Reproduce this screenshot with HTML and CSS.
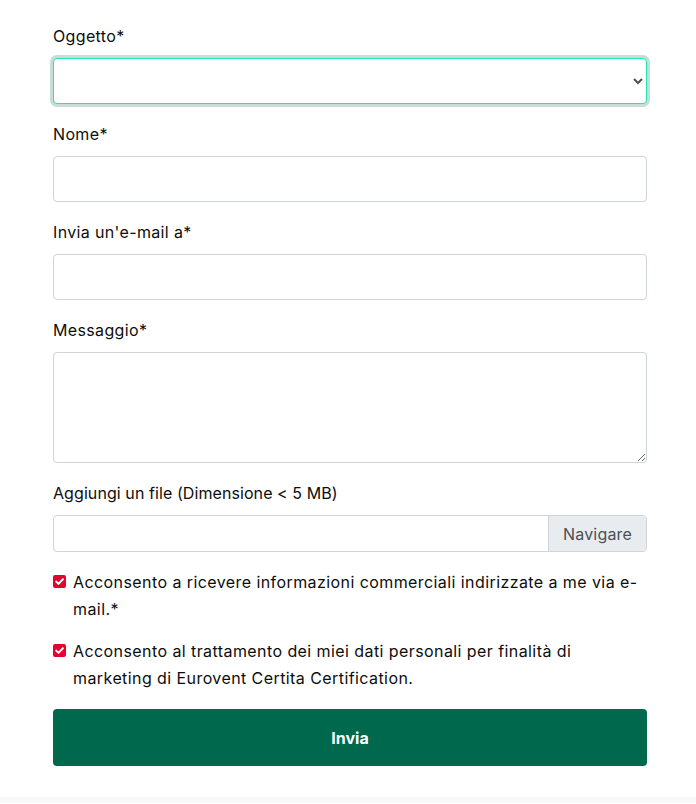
FILE: index.html
```html
<!DOCTYPE html>
<html lang="it">
<head>
<meta charset="utf-8">
<title>Contatto</title>
<link rel="stylesheet" href="styles.css">
</head>
<body>
<main class="page">
  <form class="contact-form">
    <div class="group">
      <label class="label" for="oggetto">Oggetto*</label>
      <select id="oggetto" class="control select is-focused">
        <option></option>
      </select>
    </div>
    <div class="group">
      <label class="label" for="nome">Nome*</label>
      <input id="nome" class="control" type="text">
    </div>
    <div class="group">
      <label class="label" for="email">Invia un'e-mail a*</label>
      <input id="email" class="control" type="text">
    </div>
    <div class="group">
      <label class="label" for="msg">Messaggio*</label>
      <textarea id="msg" class="control textarea"></textarea>
    </div>
    <div class="group">
      <span class="label label-file">Aggiungi un file (Dimensione &lt; 5 MB)</span>
      <div class="file">
        <span class="file-name"></span>
        <span class="file-btn">Navigare</span>
      </div>
    </div>
    <div class="check check-first">
      <span class="box"><svg viewBox="0 0 13 13" width="13" height="13"><path d="M3.2 6.6 L5.5 8.9 L9.9 4.3" fill="none" stroke="#fff" stroke-width="2" stroke-linecap="round" stroke-linejoin="round"/></svg></span>
      <span class="check-text">Acconsento a ricevere informazioni commerciali indirizzate a me via e-mail.*</span>
    </div>
    <div class="check">
      <span class="box"><svg viewBox="0 0 13 13" width="13" height="13"><path d="M3.2 6.6 L5.5 8.9 L9.9 4.3" fill="none" stroke="#fff" stroke-width="2" stroke-linecap="round" stroke-linejoin="round"/></svg></span>
      <span class="check-text">Acconsento al trattamento dei miei dati personali per finalità di marketing di Eurovent Certita Certification.</span>
    </div>
    <button type="button" class="submit">Invia</button>
  </form>
</main>
<footer class="footer"></footer>
</body>
</html>
```

FILE: styles.css
```css
html, body {
  margin: 0;
  padding: 0;
  background: #fff;
}
body {
  font-family: Inter, "Open Sans", sans-serif;
  font-size: 16px;
  color: #0d0d0d;
}
.page {
  padding: 24px 49px 31px 53px;
}
.contact-form {
  width: 594px;
  display: flex;
  flex-direction: column;
}
.group {
  display: flex;
  flex-direction: column;
  margin-bottom: 18px;
}
.label {
  display: block;
  line-height: 24px;
  height: 24px;
  margin-bottom: 10px;
  letter-spacing: 0.35px;
}
.label-file {
  letter-spacing: 0.08px;
}
.control {
  box-sizing: border-box;
  width: 100%;
  height: 46px;
  margin: 0;
  padding: 6px 12px;
  border: 1px solid #ced4da;
  border-radius: 4px;
  background: #fff;
  font: inherit;
  color: #495057;
}
.select {
  padding-right: 8px;
}
.is-focused {
  border-color: #1fe6b4;
  box-shadow: 0 0 0 3px #c7ded6;
  outline: none;
}
.textarea {
  height: 111px;
  resize: vertical;
}
.file {
  display: flex;
  height: 37px;
  box-sizing: border-box;
  border: 1px solid #ced4da;
  border-radius: 4px;
  overflow: hidden;
}
.file-name {
  flex: 1;
}
.file-btn {
  width: 98px;
  box-sizing: border-box;
  border-left: 1px solid #ced4da;
  background: #e9ecef;
  color: #495057;
  display: flex;
  align-items: center;
  justify-content: center;
  letter-spacing: 0.2px;
}
.check {
  display: flex;
  align-items: flex-start;
  gap: 7px;
  line-height: 27px;
  margin-bottom: 15px;
}
.check-first {
  margin-top: -1px;
}
.box {
  flex: none;
  width: 13px;
  height: 13px;
  margin-top: 6px;
  border-radius: 2px;
  background: #e4032e;
  display: flex;
}
.check-text {
  flex: 1;
  letter-spacing: 0.42px;
}
.submit {
  margin-top: 2px;
  height: 57px;
  border: none;
  border-radius: 4px;
  background: #00684d;
  color: #fff;
  font: inherit;
  font-weight: 700;
  cursor: pointer;
}
.footer {
  height: 6px;
  background: #f8f8f8;
}
```
